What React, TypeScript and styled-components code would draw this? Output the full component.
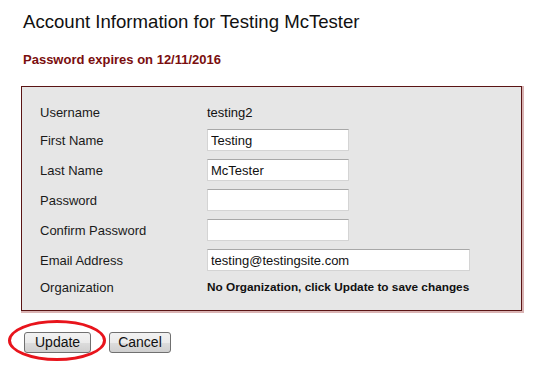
import React from "react";
import styled, { createGlobalStyle } from "styled-components";

const GlobalStyle = createGlobalStyle`
    body {
        margin: 0;
        background: #ffffff;
        font-family: "Liberation Sans", Arial, sans-serif;
        color: #111111;
    }
`;

const Page = styled.div`
    width: 541px;
    height: 369px;
    padding: 11px 0 0 21px;
    box-sizing: border-box;
`;

const Title = styled.h1`
    margin: 0 0 0 2px;
    font-size: 18.6px;
    font-weight: normal;
    line-height: 22px;
`;

const Expires = styled.div`
    margin: 19px 0 0 2px;
    font-size: 13px;
    font-weight: bold;
    color: #7a0e0e;
    line-height: 16px;
`;

const FormBox = styled.div`
    margin-top: 18px;
    width: 501px;
    box-sizing: border-box;
    padding: 12px 0 11px 18px;
    background: #e6e6e6;
    border: 1px solid #5a1414;
    box-shadow: 1px 1px 0 1px #d9b3b3;
    display: flex;
    flex-direction: column;
`;

const Row = styled.div<{ $h: number }>`
    display: grid;
    grid-template-columns: 167px auto;
    align-items: center;
    height: ${(p) => p.$h}px;
    font-size: 13px;
`;

const Label = styled.span`
    color: #1a1a1a;
`;

const Value = styled.span<{ $bold?: boolean }>`
    font-weight: ${(p) => (p.$bold ? "bold" : "normal")};
    font-size: ${(p) => (p.$bold ? "11.8px" : "13px")};
`;

const Field = styled.input<{ $w: number }>`
    width: ${(p) => p.$w}px;
    height: 22px;
    box-sizing: border-box;
    margin: 0;
    padding: 0 3px;
    border: 1px solid #d4d4d4;
    border-top-color: #a8a8a8;
    background: #ffffff;
    font-family: "Liberation Sans", Arial, sans-serif;
    font-size: 13px;
    color: #111111;
    outline: none;
`;

const Actions = styled.div`
    display: flex;
    gap: 18px;
    margin: 21px 0 0 3px;
`;

const ButtonWrap = styled.span`
    position: relative;
    display: inline-flex;
`;

const Button = styled.button<{ $pad: number }>`
    height: 21px;
    padding: 0 ${(p) => p.$pad}px;
    box-sizing: border-box;
    border: 1px solid #707070;
    border-radius: 3px;
    background: linear-gradient(#f2f2f2, #ebebeb 50%, #dddddd 51%, #cfcfcf);
    font-family: "Liberation Sans", Arial, sans-serif;
    font-size: 14px;
    line-height: 19px;
    color: #111111;
`;

const Circle = styled.span`
    position: absolute;
    left: -16px;
    top: -12px;
    width: 98px;
    height: 41px;
    box-sizing: border-box;
    border: 3px solid #e8141c;
    border-radius: 50%;
    pointer-events: none;
`;

export default function App() {
    return (
        <>
            <GlobalStyle />
            <Page>
                <Title>Account Information for Testing McTester</Title>
                <Expires>Password expires on 12/11/2016</Expires>
                <FormBox>
                    <Row $h={26}>
                        <Label>Username</Label>
                        <Value>testing2</Value>
                    </Row>
                    <Row $h={30}>
                        <Label>First Name</Label>
                        <Field $w={142} defaultValue="Testing" />
                    </Row>
                    <Row $h={30}>
                        <Label>Last Name</Label>
                        <Field $w={142} defaultValue="McTester" />
                    </Row>
                    <Row $h={30}>
                        <Label>Password</Label>
                        <Field $w={142} type="password" />
                    </Row>
                    <Row $h={30}>
                        <Label>Confirm Password</Label>
                        <Field $w={142} type="password" />
                    </Row>
                    <Row $h={30}>
                        <Label>Email Address</Label>
                        <Field $w={263} defaultValue="testing@testingsite.com" />
                    </Row>
                    <Row $h={24}>
                        <Label>Organization</Label>
                        <Value $bold>No Organization, click Update to save changes</Value>
                    </Row>
                </FormBox>
                <Actions>
                    <ButtonWrap>
                        <Button $pad={10}>Update</Button>
                        <Circle />
                    </ButtonWrap>
                    <ButtonWrap>
                        <Button $pad={8}>Cancel</Button>
                    </ButtonWrap>
                </Actions>
            </Page>
        </>
    );
}
